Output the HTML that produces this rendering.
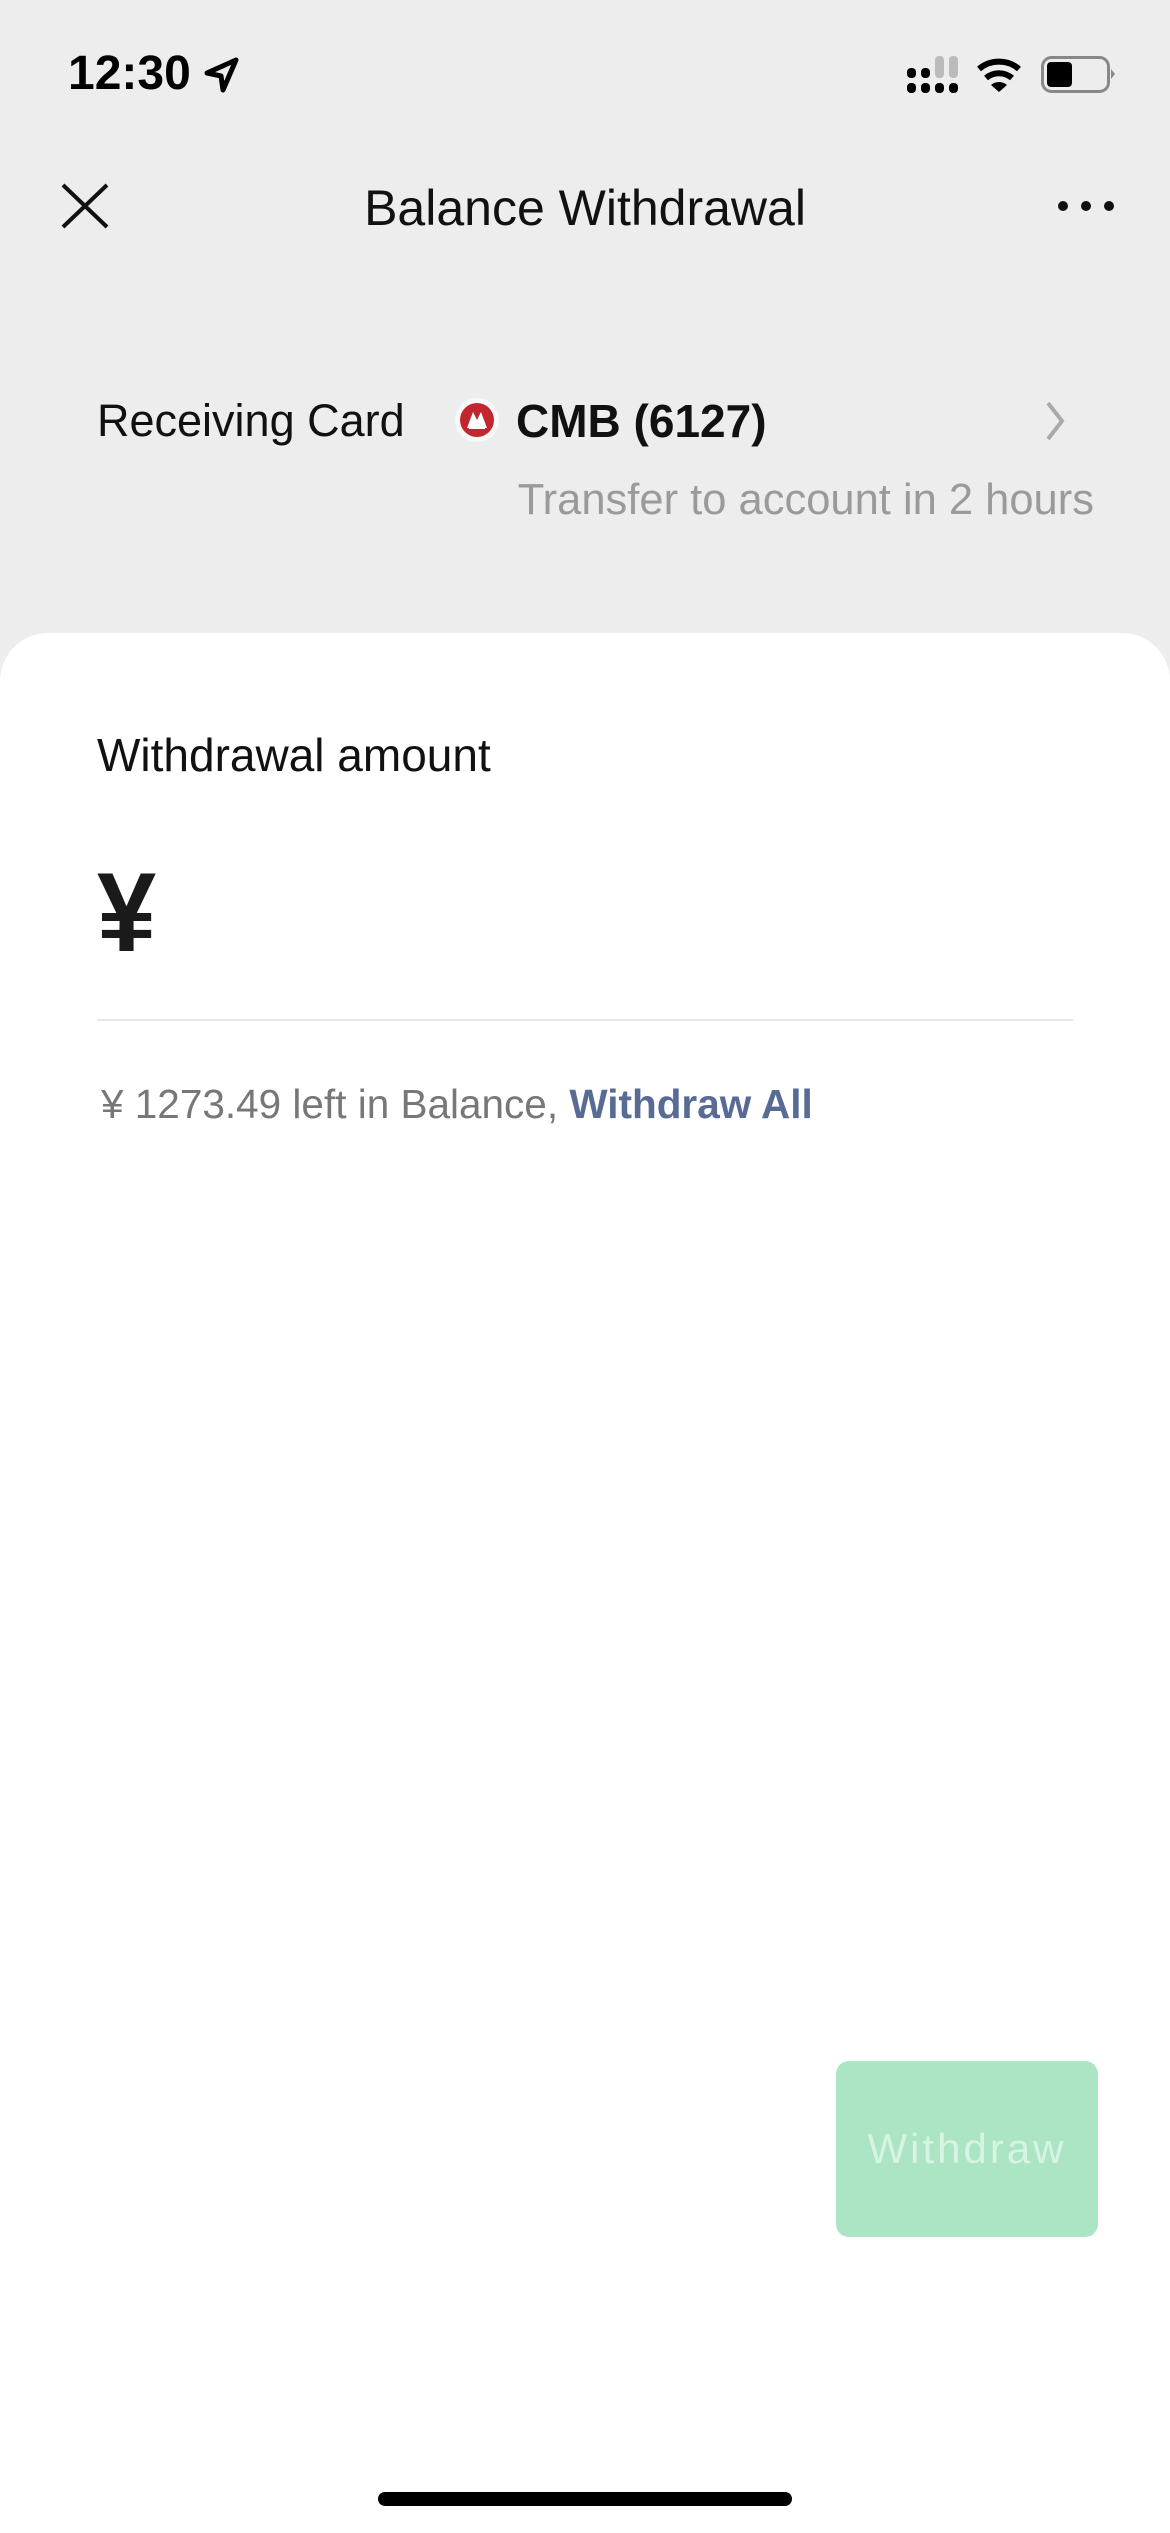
<!DOCTYPE html>
<html><head><meta charset="utf-8"><style>
*{margin:0;padding:0;box-sizing:border-box}
body{width:1170px;height:2532px;background:#ededed;font-family:"Liberation Sans",sans-serif;position:relative;overflow:hidden;color:#111}
.a{position:absolute;white-space:nowrap}
</style></head><body>
<div class="a" style="left:68px;top:46px;font-size:48px;font-weight:bold;line-height:56px;color:#000">12:30</div>
<svg class="a" style="left:202px;top:55px" width="40" height="40" viewBox="0 0 40 40"><path d="M5 18 L34 5 L21 35 L19 21 Z" fill="none" stroke="#000" stroke-width="5" stroke-linejoin="round"/></svg>
<svg class="a" style="left:900px;top:50px" width="220" height="50" viewBox="900 50 220 50">
<rect x="907" y="68" width="9" height="10" rx="4" fill="#000"/><rect x="921" y="68" width="9" height="10" rx="4" fill="#000"/>
<rect x="935" y="56" width="9" height="22" rx="4" fill="#bbb"/><rect x="949" y="56" width="9" height="22" rx="4" fill="#bbb"/>
<rect x="907" y="83" width="9" height="10" rx="4" fill="#000"/><rect x="921" y="83" width="9" height="10" rx="4" fill="#000"/><rect x="935" y="83" width="9" height="10" rx="4" fill="#000"/><rect x="949" y="83" width="9" height="10" rx="4" fill="#000"/>
<path d="M979 69 A31 31 0 0 1 1019 69" stroke="#000" stroke-width="6" fill="none"/>
<path d="M986 78 A20 20 0 0 1 1012 78" stroke="#000" stroke-width="6" fill="none"/>
<path d="M991 85 L999 92 L1007 85 A12 12 0 0 0 991 85Z" fill="#000"/>
<rect x="1042.5" y="57.5" width="66" height="34" rx="9" fill="none" stroke="#888" stroke-width="3"/>
<rect x="1047" y="62" width="25" height="25" rx="4" fill="#000"/>
<path d="M1111 69 L1115 74 L1111 79Z" fill="#888"/>
</svg>
<svg class="a" style="left:60px;top:183px" width="50" height="46"><path d="M3 2 L47 44 M47 2 L3 44" stroke="#111" stroke-width="4"/></svg>
<div class="a" style="left:0;width:1170px;text-align:center;top:178px;font-size:50px;line-height:60px;color:#111">Balance Withdrawal</div>
<svg class="a" style="left:1055px;top:198px" width="62" height="16"><circle cx="8" cy="8" r="5" fill="#111"/><circle cx="31" cy="8" r="5" fill="#111"/><circle cx="54" cy="8" r="5" fill="#111"/></svg>
<div class="a" style="left:97px;top:393px;font-size:45px;line-height:56px">Receiving Card</div>
<svg class="a" style="left:454px;top:397px" width="46" height="46"><circle cx="23" cy="23" r="22" fill="#f8f8f8"/><circle cx="23" cy="23" r="17" fill="#c1272d"/><path d="M13 31 L19 15 L23 23 L27 15 L33 31Z M17 29 L20 22 L23 29 M23 29 L26 22 L29 29" fill="#fff"/><path d="M15 31 H31" stroke="#fff" stroke-width="2"/></svg>
<div class="a" style="left:516px;top:393px;font-size:46px;font-weight:bold;line-height:56px;color:#111">CMB (6127)</div>
<svg class="a" style="left:1044px;top:400px" width="24" height="42"><path d="M4 3 L18 21 L4 39" stroke="#aaa" stroke-width="4" fill="none"/></svg>
<div class="a" style="right:76px;top:472px;font-size:43.5px;line-height:56px;color:#9a9a9a">Transfer to account in 2 hours</div>
<div class="a" style="left:0;top:633px;width:1170px;height:1900px;background:#fff;border-radius:48px 48px 0 0"></div>
<div class="a" style="left:97px;top:727px;font-size:46px;line-height:56px;color:#111">Withdrawal amount</div>
<div class="a" style="left:97px;top:853px;font-size:112px;font-weight:bold;line-height:120px;color:#1a1a1a;transform:scaleX(0.95);transform-origin:left">¥</div>
<div class="a" style="left:97px;top:1019px;width:976px;height:2px;background:#e8e8e8"></div>
<div class="a" style="left:101px;top:1078px;font-size:40.5px;line-height:52px;color:#777">¥ 1273.49 left in Balance, <b style="color:#576b95">Withdraw All</b></div>
<div class="a" style="left:836px;top:2061px;width:262px;height:176px;background:#ace5c3;border-radius:13px;color:#d7f3e2;font-size:42px;letter-spacing:3px;text-align:center;line-height:176px">Withdraw</div>
<div class="a" style="left:378px;top:2492px;width:414px;height:14px;border-radius:7px;background:#000"></div>
</body></html>
